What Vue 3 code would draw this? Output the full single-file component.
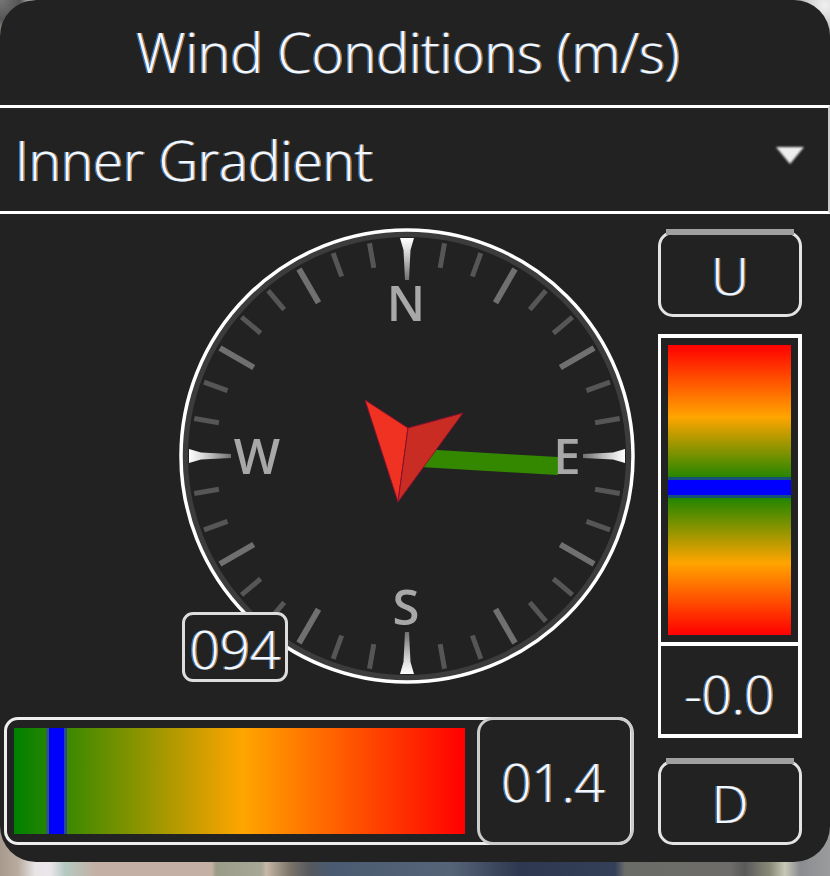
<script setup>
const cx = 235
const cy = 235
const ticks = []
for (let a = 0; a < 360; a += 10) {
  if (a % 90 === 0) continue
  const long = a % 30 === 0
  const r = (a * Math.PI) / 180
  const r1 = 216
  const r2 = long ? 177 : 191
  ticks.push({
    a,
    long,
    x1: cx + r1 * Math.sin(r),
    y1: cy - r1 * Math.cos(r),
    x2: cx + r2 * Math.sin(r),
    y2: cy - r2 * Math.cos(r)
  })
}
const cardinals = [0, 90, 180, 270]
const letters = [
  { t: 'N', x: 234, y: 100 },
  { t: 'E', x: 395, y: 253 },
  { t: 'S', x: 234, y: 404 },
  { t: 'W', x: 85, y: 253 }
]
</script>

<template>
  <div class="stage">
    <div class="panel">
      <div class="title">Wind Conditions (m/s)</div>
      <div class="select">
        <span>Inner Gradient</span>
        <i class="caret"></i>
      </div>
      <div class="body">
        <div class="left">
          <svg class="compass" width="470" height="470" viewBox="0 0 470 470">
            <defs>
              <linearGradient id="card" x1="0" y1="0" x2="0" y2="1">
                <stop offset="0" stop-color="#ffffff" />
                <stop offset="0.3" stop-color="#dddddd" />
                <stop offset="1" stop-color="#707070" />
              </linearGradient>
            </defs>
            <g class="soft">
              <circle :cx="cx" :cy="cy" r="222" fill="none" stroke="#3c3c3c" stroke-width="6" />
              <circle :cx="cx" :cy="cy" r="226" fill="none" stroke="#ffffff" stroke-width="3.5" />
              <line
                v-for="t in ticks"
                :key="t.a"
                :x1="t.x1"
                :y1="t.y1"
                :x2="t.x2"
                :y2="t.y2"
                :stroke="t.long ? '#707070' : '#565656'"
                :stroke-width="t.long ? 6 : 5"
              />
              <polygon
                v-for="c in cardinals"
                :key="c"
                points="228,17 242,17 238.5,29 237,59 233,59 231.5,29"
                fill="url(#card)"
                :transform="`rotate(${c} 235 235)`"
              />
              <polygon points="248,228 386,236 386,254 248,246" fill="#338800" />
              <text
                v-for="l in letters"
                :key="l.t"
                :x="l.x"
                :y="l.y"
                class="letter"
                text-anchor="middle"
              >{{ l.t }}</text>
              <polygon points="193,179 236,207 226,281" fill="#f03222" stroke="#8a1030" stroke-width="1" />
              <polygon points="236,207 291,192 226,281" fill="#c92c22" stroke="#8a1030" stroke-width="1" />
            </g>
          </svg>
          <div class="heading">094</div>
          <div class="speed">
            <div class="speed-track">
              <div class="h-band"></div>
            </div>
            <div class="speed-value">01.4</div>
          </div>
        </div>
        <div class="right">
          <div class="btn up">U</div>
          <div class="gauge">
            <div class="v-track">
              <div class="v-band"></div>
            </div>
          </div>
          <div class="readout">-0.0</div>
          <div class="btn down">D</div>
        </div>
      </div>
    </div>
  </div>
</template>

<style>
html, body {
  margin: 0;
  background: #222;
}
</style>

<style scoped>
.stage {
  width: 830px;
  height: 876px;
  overflow: hidden;
  background:
    radial-gradient(circle at 825px 5px, #f0f0f0 0, #d0d0d0 18px, #8a8a8a 38px, transparent 48px),
    radial-gradient(circle at 0 0, #777 0, #555 20px, transparent 32px),
    linear-gradient(90deg,
      #a89a8c 0, #b8aca0 18px, #e8e4e6 35px, #ece6ea 50px, #b4cac2 65px, #c4b0a4 96px, #c4b0a4 212px,
      #9a9c88 216px, #a8a898 262px, #c8b8a8 266px, #7a7468 290px, #55585e 310px, #4a5a70 330px,
      #566478 450px, #2e3850 520px, #334058 615px, #6a6c68 625px, #6e6c6a 730px, #5a5a5a 745px,
      #8a8a78 770px, #c8c8b8 785px, #8a8c90 800px, #9a9c9c 830px);
  font-family: "Open Sans", "Noto Sans", sans-serif;
  font-weight: 300;
  color: #f2f8ff;
}
.panel {
  width: 830px;
  height: 862px;
  background: #222222;
  border-radius: 36px;
  display: flex;
  flex-direction: column;
  overflow: hidden;
}
.title,
.select span,
.heading,
.speed-value,
.btn,
.readout {
  text-shadow: -1.5px 0 #2f78c8, 1.5px 0 #c07a34;
}
.title {
  height: 105px;
  display: flex;
  align-items: center;
  justify-content: center;
  font-size: 55px;
  padding: 0 14px 2px 0;
  box-sizing: border-box;
  white-space: nowrap;
}
.select {
  height: 109px;
  box-sizing: border-box;
  margin-left: -3px;
  border: 3.5px solid #fff;
  border-right: 2px solid #ccc;
  padding: 0 18px 0 15px;
  display: flex;
  align-items: center;
  justify-content: space-between;
  font-size: 54.5px;
}
.caret {
  width: 0;
  height: 0;
  border-left: 14px solid transparent;
  border-right: 14px solid transparent;
  border-top: 17px solid #eee;
  margin-right: 6px;
  margin-top: -9px;
  filter: blur(1px);
}
.body {
  flex: 1;
  display: flex;
  padding-left: 4px;
}
.left {
  position: relative;
  width: 654px;
}
.compass {
  display: block;
  margin: 7px 0 26px 168px;
}
.soft {
  filter: blur(0.7px);
}
.letter {
  font-family: "Open Sans", sans-serif;
  font-weight: 600;
  font-size: 49px;
  fill: #a8a8a8;
}
.heading {
  position: absolute;
  left: 178px;
  top: 398px;
  width: 106px;
  height: 70px;
  box-sizing: border-box;
  border: 3.5px solid #ddd;
  border-radius: 11px;
  background: #222;
  font-size: 53px;
  padding-top: 3px;
  display: flex;
  align-items: center;
  justify-content: center;
}
.speed {
  width: 629px;
  height: 128px;
  box-sizing: border-box;
  border: 3.5px solid #eee;
  border-radius: 14px;
  display: flex;
  align-items: center;
  padding-left: 7px;
}
.speed-track {
  position: relative;
  width: 451px;
  height: 106px;
  background: linear-gradient(90deg, #008000 0, #ffa500 229px, #ff0000 100%);
}
.h-band {
  position: absolute;
  left: 35px;
  top: 0;
  width: 15px;
  height: 100%;
  background: #0000ff;
  box-shadow: 3px 0 0 #2d4a90, -3px 0 0 #2d5a70;
}
.speed-value {
  margin-left: auto;
  margin-right: -3.5px;
  width: 157px;
  height: 128px;
  box-sizing: border-box;
  border: 3.5px solid #ccc;
  border-radius: 16px;
  font-size: 53px;
  padding-right: 4px;
  display: flex;
  align-items: center;
  justify-content: center;
}
.right {
  width: 144px;
  padding-top: 17px;
  display: flex;
  flex-direction: column;
}
.btn {
  position: relative;
  height: 86px;
  box-sizing: border-box;
  border: 3.5px solid #e4e4e4;
  border-radius: 15px;
  font-size: 52px;
  display: flex;
  align-items: center;
  justify-content: center;
}
.btn::before {
  content: "";
  position: absolute;
  left: 5px;
  right: 5px;
  top: -5.5px;
  height: 6px;
  background: #a0a0a0;
}
.down {
  height: 85px;
  margin-top: 22px;
}
.gauge {
  margin-top: 17px;
  height: 312px;
  box-sizing: border-box;
  border: 4px solid #fff;
  border-left-width: 3px;
  padding: 7px;
}
.v-track {
  position: relative;
  height: 100%;
  background: linear-gradient(180deg, #ff0000 0, #ffa500 72px, #008000 143px, #ffa500 218px, #ff0000 100%);
}
.v-band {
  position: absolute;
  left: 0;
  right: 0;
  top: 135px;
  height: 15px;
  background: #0000ff;
  box-shadow: 0 -3px 0 #14507a, 0 3px 0 #14507a;
}
.readout {
  height: 92px;
  box-sizing: border-box;
  border: 4px solid #fff;
  border-top: 0;
  border-left-width: 3px;
  font-size: 53px;
  padding-top: 6px;
  display: flex;
  align-items: center;
  justify-content: center;
}
</style>
